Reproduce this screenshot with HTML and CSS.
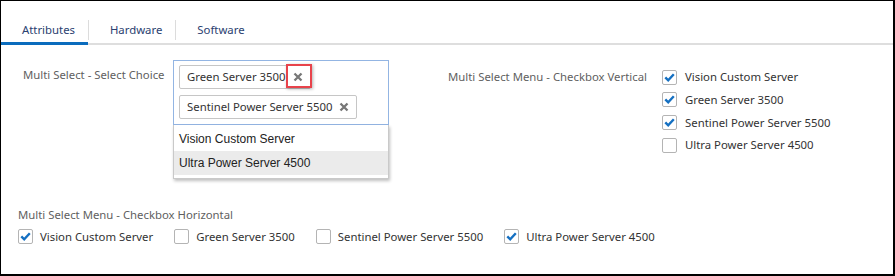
FILE: index.html
```html
<!DOCTYPE html>
<html lang="en">
<head>
    <meta charset="UTF-8">
    <meta name="viewport" content="width=device-width, initial-scale=1.0">
    <title>Multi Select Fields</title>
    <link rel="stylesheet" href="styles.css">
</head>
<body>
    <div class="panel">
        <div class="tabs">
            <a class="tab active" href="#">Attributes</a>
            <span class="tab-sep"></span>
            <a class="tab" href="#">Hardware</a>
            <span class="tab-sep"></span>
            <a class="tab" href="#">Software</a>
        </div>

        <div class="content">
            <div class="field-row">
                <div class="field field-select">
                    <label class="field-label">Multi Select - Select Choice</label>
                    <div class="multi-select">
                        <div class="choices">
                            <span class="tag">Green Server 3500
                                <span class="tag-remove marked">
                                    <svg width="10" height="10" viewBox="0 0 10 10"><path d="M1.5 1.5l7 7M8.5 1.5l-7 7"/></svg>
                                </span>
                            </span>
                            <span class="tag">Sentinel Power Server 5500
                                <span class="tag-remove">
                                    <svg width="10" height="10" viewBox="0 0 10 10"><path d="M1.5 1.5l7 7M8.5 1.5l-7 7"/></svg>
                                </span>
                            </span>
                        </div>
                        <ul class="dropdown">
                            <li>Vision Custom Server</li>
                            <li class="hover">Ultra Power Server 4500</li>
                        </ul>
                    </div>
                </div>

                <div class="field field-vertical">
                    <label class="field-label">Multi Select Menu - Checkbox Vertical</label>
                    <div class="check-list">
                        <label class="check"><span class="box"><svg viewBox="0 0 13 13"><path d="M2.3 6.4l2.9 2.9 5.6-6"/></svg></span>Vision Custom Server</label>
                        <label class="check"><span class="box"><svg viewBox="0 0 13 13"><path d="M2.3 6.4l2.9 2.9 5.6-6"/></svg></span>Green Server 3500</label>
                        <label class="check"><span class="box"><svg viewBox="0 0 13 13"><path d="M2.3 6.4l2.9 2.9 5.6-6"/></svg></span>Sentinel Power Server 5500</label>
                        <label class="check"><span class="box"></span>Ultra Power Server 4500</label>
                    </div>
                </div>
            </div>

            <div class="field-horizontal">
                <div class="field-label">Multi Select Menu - Checkbox Horizontal</div>
                <div class="check-row">
                    <label class="check"><span class="box"><svg viewBox="0 0 13 13"><path d="M2.3 6.4l2.9 2.9 5.6-6"/></svg></span>Vision Custom Server</label>
                    <label class="check"><span class="box"></span>Green Server 3500</label>
                    <label class="check"><span class="box"></span>Sentinel Power Server 5500</label>
                    <label class="check"><span class="box"><svg viewBox="0 0 13 13"><path d="M2.3 6.4l2.9 2.9 5.6-6"/></svg></span>Ultra Power Server 4500</label>
                </div>
            </div>
        </div>
    </div>
</body>
</html>
```

FILE: styles.css
```css
* {
    margin: 0;
    padding: 0;
    box-sizing: border-box;
}

body {
    font-family: 'Noto Sans', 'Open Sans', sans-serif;
    font-size: 11.35px;
    line-height: 18px;
    background: white;
}

.panel {
    width: 895px;
    height: 276px;
    border-style: solid;
    border-color: #000;
    border-width: 1px 2px 2px 1px;
    background: white;
}

/* tabs */
.tabs {
    display: flex;
    border-bottom: 2px solid #dedede;
}

.tab {
    padding: 20px 13px 4px 21px;
    margin-bottom: -2px;
    border-bottom: 2px solid transparent;
    color: #2b4170;
    text-decoration: none;
}

.tab.active {
    border-bottom-color: #0b6cbd;
    box-shadow: inset 0 -1px #0b6cbd;
}

.tab-sep {
    width: 1px;
    height: 20px;
    margin-top: 19px;
    background: #dcdcdc;
}

/* form area */
.content {
    padding-top: 15px;
}

.field-row {
    display: flex;
    padding-left: 22px;
}

.field {
    display: flex;
}

.field-label {
    color: #5f5f5f;
}

.field-select .field-label {
    width: 150px;
    margin-top: 6px;
}

.multi-select {
    position: relative;
    width: 216px;
    height: 65px;
    border: 1px solid #93b5e3;
    padding: 4px 5px 5px;
}

.choices {
    display: flex;
    flex-wrap: wrap;
    gap: 6px;
}

.tag {
    display: inline-flex;
    align-items: center;
    padding: 2px 7px;
    border: 1px solid #c6c6c6;
    border-radius: 2px;
    color: #333;
    white-space: nowrap;
}

.tag-remove {
    position: relative;
    z-index: 0;
    display: inline-flex;
    align-items: center;
    width: 10px;
    height: 18px;
    margin-left: 7px;
}

.tag-remove svg path {
    stroke: #777;
    stroke-width: 2.3;
    fill: none;
}

/* highlight around the first remove button */
.tag-remove.marked::before {
    content: '';
    position: absolute;
    top: -4px;
    bottom: -2px;
    left: -7px;
    right: -9px;
    z-index: -1;
    background: white;
    border: 2px solid #e8434b;
    box-shadow: 1px 1px 3px rgba(0,0,0,0.3);
}

.dropdown {
    position: absolute;
    top: 64px;
    left: -1px;
    width: 216px;
    list-style: none;
    padding: 2px 0 3px;
    background: white;
    border: 1px solid #c9c9c9;
    border-top: none;
    box-shadow: 1px 2px 3px rgba(0,0,0,0.25);
    font-family: 'Liberation Sans', Arial, sans-serif;
    font-size: 12px;
    color: #222;
}

.dropdown li {
    height: 24px;
    line-height: 24px;
    padding-left: 5px;
}

.dropdown li.hover {
    background: #ebebeb;
}

.field-vertical {
    margin-left: 59px;
    padding-top: 8px;
}

.field-vertical .field-label {
    width: 214px;
}

.check-list {
    display: flex;
    flex-direction: column;
    gap: 4.8px;
}

.check {
    display: flex;
    align-items: center;
    color: #333;
    white-space: nowrap;
}

.box {
    width: 15px;
    height: 15px;
    margin-right: 8px;
    border: 1px solid #b4b4b4;
    border-radius: 2px;
    background: white;
}

.box svg {
    display: block;
    width: 13px;
    height: 13px;
}

.box svg path {
    fill: none;
    stroke: #1570c2;
    stroke-width: 2.4;
}

.field-horizontal {
    margin-top: 51.6px;
    padding-left: 17px;
}

.check-row {
    display: flex;
    gap: 21px;
    margin-top: 4px;
}

.check-row .box {
    margin-right: 7px;
}
```
